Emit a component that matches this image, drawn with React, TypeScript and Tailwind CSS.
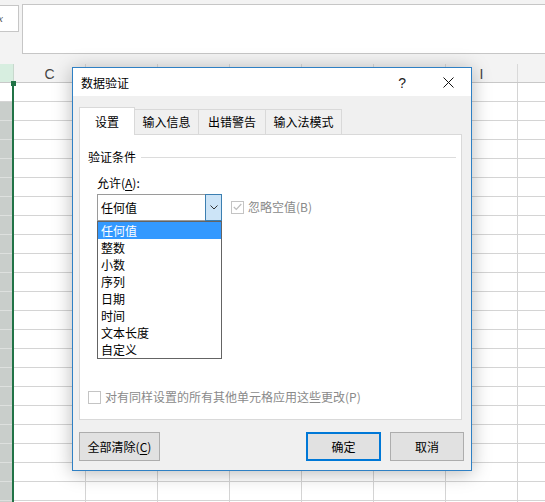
import React from "react";

// Column letters; columns hidden behind the dialog or past the right edge carry no label.
const COLS = [
  { key: "C", label: "C" },
  { key: "D", label: "" },
  { key: "E", label: "" },
  { key: "F", label: "" },
  { key: "G", label: "" },
  { key: "H", label: "" },
  { key: "I", label: "I" },
  { key: "J", label: "" },
];
const ROW_COUNT = 23;
const OPTIONS = ["任何值", "整数", "小数", "序列", "日期", "时间", "文本长度", "自定义"];

function Sheet() {
  return (
    <div className="flex flex-col">
      {/* formula bar strip */}
      <div className="h-[64px] bg-[#f3f3f3] flex items-start pt-[4px]">
        <div className="-ml-px mt-px w-[20px] h-[27px] bg-white border border-[#c6c6c6] overflow-hidden flex items-center">
          <span className="-ml-[5px] italic text-[11px] leading-none text-[#555] font-['Liberation_Serif',serif]">fx</span>
        </div>
        <div className="ml-[3px] flex-1 h-[50px] -mr-px bg-white border border-[#c6c6c6]" />
      </div>

      {/* column headers */}
      <div className="flex h-[19px] bg-[#f3f3f3] border-b border-[#c8c8c8]">
        <div className="w-[14px] shrink-0 bg-[#d7eee0] border-r border-[#c8d8cd]" />
        {COLS.map((c) => (
          <div
            key={c.key}
            className="w-[72px] shrink-0 border-r border-[#d9d9d9] flex items-center justify-center pt-[2px] text-[14px] text-[#444] font-['Liberation_Sans',sans-serif]"
          >
            {c.label}
          </div>
        ))}
      </div>

      {/* cell rows */}
      {Array.from({ length: ROW_COUNT }).map((_, r) => (
        <div key={r} className="flex h-[19px]">
          <div
            className={
              r === 0
                ? "w-[12px] shrink-0 bg-white border-b border-[#d4d4d4]"
                : "w-[12px] shrink-0 bg-[#c9cecb] border-b border-[#dde0de]"
            }
          />
          <div className="w-[2px] shrink-0 bg-[#217346]" />
          {COLS.map((c) => (
            <div key={c.key} className="w-[72px] shrink-0 border-r border-b border-[#d4d4d4]" />
          ))}
        </div>
      ))}
    </div>
  );
}

function CheckBox({ checked, disabled }: { checked?: boolean; disabled?: boolean }) {
  return (
    <div
      className={
        disabled
          ? "w-[13px] h-[13px] shrink-0 border border-[#c4c4c4] bg-white flex items-center justify-center"
          : "w-[13px] h-[13px] shrink-0 border border-[#333] bg-white flex items-center justify-center"
      }
    >
      {checked && (
        <svg width="9" height="8" viewBox="0 0 9 8">
          <polyline points="0.8,4 3.3,6.5 8.3,1" fill="none" stroke="#bdbdbd" strokeWidth="1.2" />
        </svg>
      )}
    </div>
  );
}

function Dialog() {
  return (
    <div className="absolute left-[72px] top-[67px] w-[400px] h-[404px] border border-[#2f80c4] bg-[#f0f0f0] shadow-[0_2px_18px_rgba(0,0,0,0.28)] flex flex-col text-[12px] leading-[16px] text-black">
      {/* title bar */}
      <div className="h-[28px] shrink-0 bg-white flex items-center pl-[8px]">
        <span className="pt-[2px]">数据验证</span>
        <span className="ml-auto text-[14px] font-['Liberation_Sans',sans-serif] text-[#222] pt-[2px]">?</span>
        <svg className="ml-[37px] mr-[17px]" width="11" height="11" viewBox="0 0 11 11">
          <line x1="0.5" y1="0.5" x2="10.5" y2="10.5" stroke="#111" strokeWidth="1" />
          <line x1="10.5" y1="0.5" x2="0.5" y2="10.5" stroke="#111" strokeWidth="1" />
        </svg>
      </div>

      {/* tabs */}
      <div className="mt-[11px] ml-[6px] flex items-end h-[27px] shrink-0">
        <div className="relative z-10 -mb-px w-[56px] h-[28px] bg-white border border-b-0 border-[#d9d9d9] flex items-center justify-center">
          设置
        </div>
        <div className="w-[64px] h-[25px] border-t border-r border-[#d9d9d9] flex items-center justify-center">
          输入信息
        </div>
        <div className="w-[67px] h-[25px] border-t border-r border-[#d9d9d9] flex items-center justify-center">
          出错警告
        </div>
        <div className="w-[76px] h-[25px] border-t border-r border-[#d9d9d9] flex items-center justify-center">
          输入法模式
        </div>
      </div>

      {/* settings panel */}
      <div className="ml-[6px] w-[383px] h-[286px] shrink-0 bg-white border border-[#d9d9d9] flex flex-col">
        <div className="mt-[14px] pl-[8px] pr-[5px] flex items-center">
          <span>验证条件</span>
          <div className="ml-[5px] flex-1 h-px bg-[#dcdcdc]" />
        </div>

        <div className="mt-[10px] pl-[17px]">
          允许(<span className="underline underline-offset-2">A</span>):
        </div>

        <div className="mt-[3px] pl-[17px] flex items-start">
          <div className="relative w-[125px] h-[27px] border border-[#9a9a9a] bg-white flex items-center">
            <span className="pl-[3px]">任何值</span>
            <div className="ml-auto -mr-px -my-px w-[17px] h-[27px] bg-[#cce4f7] border border-[#3c7fb1] flex items-center justify-center">
              <svg width="8" height="5" viewBox="0 0 8 5">
                <polyline points="0.5,0.5 4,4 7.5,0.5" fill="none" stroke="#333" strokeWidth="1" />
              </svg>
            </div>

            {/* open drop-down list */}
            <div className="absolute left-[-1px] top-[26px] w-[125px] h-[138px] border border-[#646464] bg-white flex flex-col">
              {OPTIONS.map((o, i) => (
                <div
                  key={o}
                  className={
                    i === 0
                      ? "h-[17px] shrink-0 bg-[#3399ff] text-white pl-[3px] flex items-center"
                      : "h-[17px] shrink-0 pl-[3px] flex items-center"
                  }
                >
                  {o}
                </div>
              ))}
            </div>
          </div>

          <div className="ml-[9px] mt-[5px] flex items-center">
            <CheckBox checked disabled />
            <span className="ml-[4px] text-[#8a8a8a]">忽略空值(B)</span>
          </div>
        </div>

        <div className="mt-auto mb-[14px] pl-[8px] flex items-center">
          <CheckBox disabled />
          <span className="ml-[4px] text-[#8a8a8a]">对有同样设置的所有其他单元格应用这些更改(P)</span>
        </div>
      </div>

      {/* buttons */}
      <div className="mt-[12px] pl-[6px] pr-[7px] flex items-center">
        <button className="w-[81px] h-[29px] bg-[#e1e1e1] border border-[#adadad] flex items-center justify-center">
          全部清除(<span className="underline underline-offset-2">C</span>)
        </button>
        <button className="ml-auto w-[75px] h-[29px] bg-[#e1e1e1] border-2 border-[#0078d7] flex items-center justify-center">
          确定
        </button>
        <button className="ml-[9px] w-[74px] h-[29px] bg-[#e1e1e1] border border-[#adadad] flex items-center justify-center">
          取消
        </button>
      </div>
    </div>
  );
}

export default function App() {
  return (
    <div className="relative w-[545px] h-[502px] overflow-hidden bg-white font-['Noto_Sans_CJK_SC','Noto_Sans',sans-serif]">
      <Sheet />
      {/* active-cell corner marker */}
      <div className="absolute left-[11px] top-[81px] w-[5px] h-[5px] bg-[#217346]" />
      <Dialog />
    </div>
  );
}
